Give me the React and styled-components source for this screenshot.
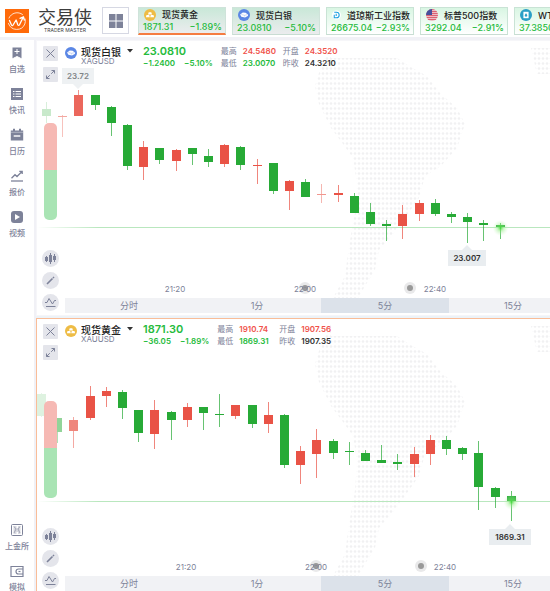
import React from "react";
import styled, { createGlobalStyle, css } from "styled-components";

const green = "#27aa36";
const red = "#e95346";
const up = "#f0524a";
const down = "#25bb3c";
const slate = "#7d8299";

const GlobalStyle = createGlobalStyle`
  * { box-sizing: border-box; }
  body {
    margin: 0;
    background: #fff;
    color: #333;
    font-family: Inter, "Noto Sans CJK SC", sans-serif;
    font-size: 8px;
  }
  button { font: inherit; color: inherit; padding: 0; border: 0; background: none; cursor: pointer; }
`;

const Page = styled.div`
  display: flex;
  flex-direction: column;
  height: 100vh;
  overflow: hidden;
`;

const TopBar = styled.header`
  display: flex;
  flex: none;
  align-items: flex-start;
  height: 40px;
  padding: 7px 0 0 5px;
  border-bottom: 3px solid #f1f1f6;
  overflow: hidden;
`;

const Brand = styled.a`
  display: flex;
  flex: none;
  gap: 9px;
  width: 97px;
  padding-top: 2px;
  color: #3c3c3c;
  text-decoration: none;
`;

const BrandText = styled.span`
  display: flex;
  flex-direction: column;
  align-items: center;
`;

const BrandName = styled.strong`
  font-size: 18px;
  line-height: 18px;
  font-weight: 400;
`;

const BrandSub = styled.small`
  font-size: 5px;
  line-height: 7px;
  letter-spacing: 0;
  white-space: nowrap;
`;

const GridButton = styled.button`
  display: grid;
  place-items: center;
  flex: none;
  width: 27px;
  height: 27px;
  margin-right: 9px;
  border: 1px solid #d6d8e3;
`;

const TickerList = styled.div`
  display: flex;
  gap: 6px;
`;

const Ticker = styled.button`
  flex: none;
  width: 88px;
  height: 28px;
  padding: 0 3px 0 4px;
  border: 1px solid ${(p) => (p.$shaded ? "#cfe3da" : "#c9e3d5")};
  border-bottom: ${(p) => (p.$active ? "2px solid #f57c42" : "1px solid #c9dcd3")};
  background: ${(p) =>
    p.$shaded ? "linear-gradient(#c9e8d8, #ebecee)" : "linear-gradient(#d9f6e3, #fff)"};
  text-align: left;
`;

const TickerHead = styled.span`
  display: flex;
  align-items: center;
  gap: 6px;
  height: 13px;
  padding-left: 1px;
  color: #222;
  font-size: 9px;
  font-weight: 500;
  white-space: nowrap;
`;

const TickerNumbers = styled.span`
  display: flex;
  justify-content: space-between;
  color: ${down};
  font-size: 9px;
  line-height: 12px;
  font-weight: 500;
`;

const Body = styled.div`
  display: flex;
  flex: 1;
  min-height: 0;
`;

const SideBar = styled.nav`
  display: flex;
  flex: none;
  flex-direction: column;
  justify-content: space-between;
  width: 36px;
  padding-top: 6px;
  border-right: 2px solid #f1f1f6;
`;

const SideGroup = styled.div`
  display: flex;
  flex-direction: column;
  gap: 14px;
`;

const SideItem = styled.button`
  display: flex;
  flex-direction: column;
  align-items: center;
  gap: 5px;
  color: ${slate};
  font-size: 8px;
  line-height: 8px;
  font-weight: 500;
  white-space: nowrap;
`;

const Panels = styled.main`
  display: flex;
  flex: 1;
  flex-direction: column;
  gap: 2px;
  min-width: 0;
  overflow: hidden;
  background: #edf3f8;
`;

const PanelBox = styled.section`
  position: relative;
  display: flex;
  flex: none;
  padding-bottom: 2px;
  border: 1px solid ${(p) => (p.$selected ? "#f9bd98" : "#f6f6f9")};
  border-right: 0;
  background: #fff;
  overflow: hidden;
`;

const Canvas = styled.svg`
  position: absolute;
  inset: 0;
  width: 100%;
  height: 100%;
`;

const AxisText = styled.text`
  fill: ${slate};
  font-size: 8px;
  text-anchor: middle;
`;

const TagText = styled.text`
  fill: ${(p) => (p.$faded ? "#808487" : "#333")};
  font-size: 8px;
  font-weight: 600;
  text-anchor: middle;
`;

const Rail = styled.div`
  position: relative;
  display: flex;
  flex: none;
  flex-direction: column;
  align-items: center;
  width: 28px;
  padding: 5px 1px 2px 0;
`;

const SquareButton = styled.button`
  display: grid;
  place-items: center;
  width: 15px;
  height: 15px;
  margin-bottom: 6px;
  border-radius: 1px;
  background: #e4e5eb;
  color: ${slate};
`;

const Gauge = styled.div`
  width: 13px;
  height: 97px;
  margin: 35px 0 30px;
  border-radius: 5px;
  background: linear-gradient(#f6b9b4 48%, #a9e4b4 48%);
`;

const Tools = styled.div`
  display: flex;
  flex-direction: column;
  gap: 5px;
`;

const RoundButton = styled.button`
  display: grid;
  place-items: center;
  width: 17px;
  height: 17px;
  border-radius: 50%;
  background: #e4e5eb;
  color: ${slate};
`;

const Content = styled.div`
  position: relative;
  display: flex;
  flex: 1;
  flex-direction: column;
  justify-content: space-between;
  min-width: 0;
  overflow: hidden;
`;

const PanelHead = styled.div`
  display: flex;
  padding-top: 4px;
`;

const CoinSlot = styled.span`
  flex: none;
  width: 16px;
  padding-top: 2px;
`;

const Symbol = styled.div`
  flex: none;
  width: 62px;
`;

const SymbolPicker = styled.button`
  display: flex;
  align-items: center;
  gap: 6px;
  height: 12px;
  color: #222;
  font-size: 10px;
  font-weight: 500;
  white-space: nowrap;
`;

const SymbolCode = styled.div`
  color: ${slate};
  font-size: 8px;
  line-height: 8px;
`;

const Quote = styled.div`
  flex: none;
  margin-right: 8px;
  color: ${down};
`;

const Price = styled.div`
  font-size: 11px;
  line-height: 12px;
  font-weight: 600;
`;

const Change = styled.div`
  display: flex;
  gap: 9px;
  font-size: 8px;
  line-height: 12px;
  font-weight: 600;
`;

const Stats = styled.dl`
  display: grid;
  grid-template-columns: 22px 40px 22px auto;
  grid-auto-rows: 12px;
  margin: 0;
  font-size: 8px;
  line-height: 12px;
  white-space: nowrap;
`;

const Pair = styled.div`
  display: contents;
`;

const StatLabel = styled.dt`
  color: ${slate};
`;

const StatValue = styled.dd`
  margin: 0;
  color: ${(p) => p.$color};
  font-weight: 600;
`;

const Tabs = styled.div`
  display: flex;
  height: 15px;
  overflow: hidden;
`;

const Tab = styled.button`
  flex: 0 0 128px;
  background: #f1f2f5;
  color: ${slate};
  font-size: 9px;
  line-height: 15px;
  ${(p) => p.$on && css`background: #dce2ea;`}
`;

function Coin({ kind, size = 12 }) {
  return (
    <svg width={size} height={size} viewBox="0 0 12 12" aria-hidden="true">
      {kind === "gold" && (
        <>
          <circle cx="6" cy="6" r="6" fill="#eebc45" />
          <path d="M4.7 3.2h2.6l.7 2.2H4zM2.5 6h2.7l.6 2.3H1.9zM6.8 6h2.7l.6 2.3H6.2z" fill="#fff" />
        </>
      )}
      {kind === "silver" && (
        <>
          <circle cx="6" cy="6" r="6" fill="#5b87e5" />
          <path d="M2.1 5.4 4.8 3.5l2.8.2 2.5 2-.3 1.4-2.8 1.4-3.6-.8z" fill="#fff" />
          <path d="m3.3 5.5 3.3.8 2.6-.6M6.6 6.3v1.2" stroke="#a9c0f3" strokeWidth=".6" fill="none" />
        </>
      )}
      {kind === "dow" && (
        <>
          <circle cx="6" cy="6" r="6" fill="#fff" />
          <path d="M3 2.200h2.800a3.800 3.800 0 0 1 0 7.600H3V5.500M5.600 4.300v3.200" stroke="#1a9fe0" strokeWidth="1.400" fill="none" />
        </>
      )}
      {kind === "usa" && (
        <>
          <clipPath id="flag"><circle cx="6" cy="6" r="6" /></clipPath>
          <g clipPath="url(#flag)">
            <path d="M0 0h12v12H0z" fill="#f4d9dd" />
            <path d="M0 .7h12M0 2.7h12M0 4.7h12M0 6.7h12M0 8.7h12M0 10.7h12" stroke="#d6455b" />
            <path d="M0 0h6v6H0z" fill="#46519c" />
          </g>
        </>
      )}
      {kind === "oil" && (
        <>
          <circle cx="6" cy="6" r="6" fill="#2b9fc6" />
          <path d="M3.4 2.8h5.2v6.4H3.4z" fill="#fff" />
          <path d="M6 4.3c2 2.2 1.3 3.4 0 3.4s-2-1.2 0-3.4z" fill="#2b9fc6" />
        </>
      )}
    </svg>
  );
}

const tickers = [
  { kind: "gold", name: "现货黄金", price: "1871.31", pct: "−1.89%", shaded: true, active: true },
  { kind: "silver", name: "现货白银", price: "23.0810", pct: "−5.10%", shaded: true },
  { kind: "dow", name: "道琼斯工业指数", price: "26675.04", pct: "−2.93%" },
  { kind: "usa", name: "标普500指数", price: "3292.04", pct: "−2.91%" },
  { kind: "oil", name: "WTI原油", price: "37.3850", pct: "−3.46%" },
];

const sideIcons = {
  bookmark: <path d="M2 1h10v12L7 10.5 2 13zM7 3v5M4.500 5.500h5" fill="#7d8299" stroke="#fff" strokeWidth="1" />,
  news: (
    <>
      <path d="M1 1h12v12H1z" fill="#7d8299" />
      <path d="M3 4.500h1.500M5.500 4.500H11M3 7h1.500M5.500 7H11M3 9.500h1.500M5.500 9.500H11" stroke="#fff" strokeWidth="1" />
    </>
  ),
  calendar: (
    <>
      <path d="M.8 2.500h12.400V12.500H.8zM3 .8h2v3H3zM9 .8h2v3H9z" fill="#7d8299" />
      <path d="M.8 4.300h12.400" stroke="#fff" strokeWidth=".4" />
      <path d="M3.700 8h6.600" stroke="#fff" strokeWidth="1.400" />
    </>
  ),
  quotes: (
    <>
      <path d="M1.500 9.200 5 5.700l2 1.800L12 2.500M9.300 2.300H12.200V5" fill="none" stroke="#7d8299" strokeWidth="1.300" />
      <path d="M1 12h12" stroke="#7d8299" strokeWidth="1.300" />
    </>
  ),
  video: (
    <>
      <rect x="1" y="1" width="12" height="12" rx="3" fill="#7d8299" />
      <path d="m5 4 5 3-5 3z" fill="#fff" />
    </>
  ),
  exchange: (
    <g fill="none" stroke="#7d8299">
      <rect x="1.500" y="1.500" width="11" height="11" rx="1" />
      <path d="M3.500 4h3M8 4h2.500M3.500 6h7M3.500 8h7M3.500 10h3M8 10h2.500M4 3.500l2 2.500-2 4M10 3.500 8 6l2 4" strokeWidth=".6" />
    </g>
  ),
  wallet: (
    <g fill="none" stroke="#7d8299">
      <path d="M13 4.500v-2H1v10h12v-2M13 5H8.500a2.500 2.500 0 0 0 0 5H13z" strokeWidth="1.200" />
      <path d="M8.500 7.500h2" strokeWidth="1.200" />
    </g>
  ),
};

const sideTop = [
  ["bookmark", "自选"],
  ["news", "快讯"],
  ["calendar", "日历"],
  ["quotes", "报价"],
  ["video", "视频"],
];
const sideBottom = [
  ["exchange", "上金所"],
  ["wallet", "模拟"],
];

// Each candle: colour, high, low, body top, body bottom, opacity.
const silverCandles = [
  ["g", 61, 82, 68, 75, 0.25],
  ["r", 74, 96, 75, 76, 0.5],
  ["r", 49, 75, 54, 75, 0.88],
  ["g", 54, 69, 54, 64],
  ["g", 65, 95, 66, 82],
  ["g", 83, 129, 84, 125],
  ["r", 100, 139, 106, 126],
  ["g", 107, 123, 107, 119],
  ["r", 108, 130, 109, 120],
  ["g", 107, 124, 107, 113],
  ["g", 108, 126, 115, 121],
  ["r", 103, 126, 104, 123],
  ["g", 105, 129, 106, 124],
  ["r", 118, 143, 124, 125],
  ["g", 122, 153, 122, 150],
  ["r", 139, 169, 140, 150],
  ["g", 138, 156, 141, 156],
  ["r", 143, 162, 153, 154, 0.6],
  ["r", 144, 161, 152, 154],
  ["g", 152, 172, 155, 172],
  ["g", 162, 185, 171, 183],
  ["g", 179, 200, 183, 185],
  ["r", 164, 198, 173, 185],
  ["r", 159, 180, 162, 173],
  ["g", 158, 175, 162, 173],
  ["g", 171, 182, 173, 176],
  ["g", 172, 202, 176, 181],
  ["g", 179, 200, 182, 184],
  ["g", 182, 198, 184, 186],
];

const goldCandles = [
  ["g", 74, 98, 75, 97, 0.15],
  ["g", 99, 124, 99, 113, 0.5],
  ["r", 98, 129, 101, 112, 0.7],
  ["r", 67, 101, 77, 99],
  ["r", 68, 88, 72, 77],
  ["g", 71, 100, 73, 89],
  ["g", 91, 123, 91, 114],
  ["r", 81, 130, 91, 115],
  ["g", 92, 121, 93, 101],
  ["r", 84, 108, 88, 101],
  ["g", 88, 111, 88, 94],
  ["g", 75, 108, 95, 96],
  ["r", 86, 100, 86, 97],
  ["g", 86, 109, 86, 105],
  ["r", 83, 114, 96, 105],
  ["g", 95, 149, 96, 146],
  ["r", 127, 165, 132, 146],
  ["r", 110, 159, 121, 135],
  ["g", 120, 140, 122, 134],
  ["g", 123, 146, 132, 133],
  ["g", 131, 142, 134, 142],
  ["g", 126, 144, 141, 144],
  ["g", 135, 151, 143, 145],
  ["r", 128, 158, 135, 145],
  ["r", 116, 146, 121, 135],
  ["g", 117, 136, 121, 130],
  ["g", 128, 141, 129, 135],
  ["g", 122, 191, 134, 168],
  ["g", 168, 189, 169, 178],
  ["g", 172, 202, 177, 182],
];

const panels = [
  {
    id: "silver", name: "现货白银", code: "XAGUSD", price: "23.0810", change: "−1.2400", pct: "−5.10%",
    high: "24.5480", open: "24.3520", low: "23.0070", prev: "24.3210",
    candles: silverCandles, start: 9, line: 187,
    times: [[138, "21:20"], [268, "22:00"], [398, "22:40"]], events: [268, 373],
    topTag: { x: 41, y: 27, w: 32, text: "23.72" }, lowTag: { x: 430, y: 209, w: 38, text: "23.007" },
  },
  {
    id: "gold", name: "现货黄金", code: "XAUUSD", price: "1871.30", change: "−36.05", pct: "−1.89%",
    high: "1910.74", open: "1907.56", low: "1869.31", prev: "1907.35",
    candles: goldCandles, start: 4, line: 183, selected: true,
    times: [[149, "21:20"], [279, "22:00"], [408, "22:40"]], events: [279, 384],
    lowTag: { x: 473, y: 210, w: 42, text: "1869.31" },
  },
];

const continents =
  "M294 17h66l12 8 18 10 14 18 16 14 8 16-8 24-16 18-16 10-6 22-14 20-12 16-14 16-4 20-10 16-8 14-4 12h-24l4-14 12-22 4-30 6-34 2-28-4-26-10-14-12-16-12-24-4-18 6-20 10-20zM494 7h40v26h-34z";

function Chart({ panel }) {
  const { id, candles, start, line, topTag, lowTag } = panel;
  const xs = candles.map((_, i) => Math.round(start + i * 16.2));
  const last = xs[xs.length - 1];
  return (
    <Canvas aria-hidden="true">
      <defs>
        <pattern id={`dots-${id}`} width="4" height="5" patternUnits="userSpaceOnUse">
          <circle cx="2" cy="2.500" r="1.300" fill="#f1f1f2" />
        </pattern>
        <linearGradient id={`fade-${id}`}>
          <stop offset="0" stopColor="#b9e7be" stopOpacity="0" />
          <stop offset=".12" stopColor="#b9e7be" />
        </linearGradient>
        <radialGradient id={`glow-${id}`}>
          <stop offset="0" stopColor="#3ddc34" stopOpacity=".9" />
          <stop offset=".4" stopColor="#8cec7c" stopOpacity=".45" />
          <stop offset="1" stopColor="#c9f7c0" stopOpacity="0" />
        </radialGradient>
      </defs>
      <path d={continents} fill={`url(#dots-${id})`} />
      <rect x="0" y={line - 1} width="100%" height="1" fill={`url(#fade-${id})`} />
      {candles.map(([tone, high, low, top, bottom, alpha = 1], i) => (
        <g key={i} fill={tone === "g" ? green : red} opacity={alpha}>
          <rect x={xs[i]} y={high} width="1" height={low - high} opacity=".7" />
          <rect x={xs[i] - 4} y={top} width="9" height={Math.max(1, bottom - top)} />
        </g>
      ))}
      <circle cx={last + 0.5} cy={line} r="8" fill={`url(#glow-${id})`} />
      {topTag && (
        <g>
          <path
            d={`M${topTag.x - topTag.w / 2} ${topTag.y}h${topTag.w}v16h-${topTag.w / 2 - 5}l-5 5-5-5h-${topTag.w / 2 - 5}z`}
            fill="#eef1f3"
          />
          <TagText x={topTag.x} y={topTag.y + 11} $faded>{topTag.text}</TagText>
        </g>
      )}
      <path
        d={`M${lowTag.x - lowTag.w / 2} ${lowTag.y}h${lowTag.w / 2 - 5}l5-5 5 5h${lowTag.w / 2 - 5}v16h-${lowTag.w}z`}
        fill="#e9edf0"
      />
      <TagText x={lowTag.x} y={lowTag.y + 11}>{lowTag.text}</TagText>
      {panel.events.map((x) => (
        <g key={x}>
          <circle cx={x} cy="247" r="6" fill="#e9e9ea" />
          <circle cx={x} cy="247" r="3" fill="#999" />
        </g>
      ))}
      {panel.times.map(([x, label]) => (
        <AxisText key={label} x={x} y="251">{label}</AxisText>
      ))}
    </Canvas>
  );
}

function Stat({ label, value, color }) {
  return (
    <Pair>
      <StatLabel>{label}</StatLabel>
      <StatValue $color={color}>{value}</StatValue>
    </Pair>
  );
}

function Panel({ panel }) {
  return (
    <PanelBox $selected={panel.selected}>
      <Chart panel={panel} />
      <Rail>
        <SquareButton aria-label="关闭">
          <svg width="11" height="11" fill="none" stroke="currentColor"><path d="m1.500 1.500 8 8m0-8-8 8" /></svg>
        </SquareButton>
        <SquareButton aria-label="放大">
          <svg width="11" height="11" fill="none" stroke="currentColor">
            <path d="M6.200 4.800 9.500 1.500M6.500 1.500h3v3M4.800 6.200 1.500 9.500M1.500 6.500v3h3" />
          </svg>
        </SquareButton>
        <Gauge />
        <Tools>
          <RoundButton aria-label="图表类型">
            <svg width="13" height="13" fill="currentColor">
              <path d="M1 5h3v4H1zM5 3h3v7H5zM9 4h3v4H9zM2 4h1v6H2zM6 1h1v11H6zM10 2h1v8h-1z" />
            </svg>
          </RoundButton>
          <RoundButton aria-label="画线">
            <svg width="11" height="11" stroke="currentColor" strokeWidth="1.600">
              <path d="m2 9 5.500-5.500M8 3l1-1" />
            </svg>
          </RoundButton>
          <RoundButton aria-label="指标">
            <svg width="13" height="13" fill="none" stroke="currentColor">
              <path d="M1 6.500h2L5 2.500l3.500 5.500 2-3.500H12M2 10.500h9.500" />
            </svg>
          </RoundButton>
        </Tools>
      </Rail>
      <Content>
        <PanelHead>
          <CoinSlot><Coin kind={panel.id} /></CoinSlot>
          <Symbol>
            <SymbolPicker>
              {panel.name}
              <svg width="6" height="4" fill="#333"><path d="M0 0h6L3 3.500z" /></svg>
            </SymbolPicker>
            <SymbolCode>{panel.code}</SymbolCode>
          </Symbol>
          <Quote>
            <Price>{panel.price}</Price>
            <Change><span>{panel.change}</span><span>{panel.pct}</span></Change>
          </Quote>
          <Stats>
            <Stat label="最高" value={panel.high} color={up} />
            <Stat label="开盘" value={panel.open} color={up} />
            <Stat label="最低" value={panel.low} color={down} />
            <Stat label="昨收" value={panel.prev} color="#333" />
          </Stats>
        </PanelHead>
        <Tabs>
          {["分时", "1分", "5分", "15分"].map((label) => (
            <Tab key={label} $on={label === "5分"}>{label}</Tab>
          ))}
        </Tabs>
      </Content>
    </PanelBox>
  );
}

function SideLinks({ items }) {
  return (
    <SideGroup>
      {items.map(([icon, label]) => (
        <SideItem key={icon}>
          <svg width="14" height="14" aria-hidden="true">{sideIcons[icon]}</svg>
          {label}
        </SideItem>
      ))}
    </SideGroup>
  );
}

export default function App() {
  return (
    <Page>
      <GlobalStyle />
      <TopBar>
        <Brand href="#">
          <svg width="24" height="24" aria-hidden="true">
            <path d="M0 0h24v24H0z" fill="#ff6a0a" />
            <g fill="none" stroke="#fff" strokeLinecap="round" strokeLinejoin="round">
              <path d="M17.500 5.500A8.700 8.700 0 0 0 4 9M3.500 14.500a8.700 8.700 0 0 0 16.300.5c.6-1.500.7-3.500.4-5" strokeWidth=".8" />
              <path d="m4.500 11.500 2 4.500c.5.800 1.200.7 1.600 0l3-5 1.700 4.700c.4.900 1.200.9 1.700 0L18.300 8M15 9.300l3.500-1.500.8 3.200" strokeWidth="1.300" />
            </g>
          </svg>
          <BrandText>
            <BrandName>交易侠</BrandName>
            <BrandSub>TRADER MASTER</BrandSub>
          </BrandText>
        </Brand>
        <GridButton aria-label="布局">
          <svg width="14" height="14" fill={slate}>
            <path d="M0 0h6.500v6.500H0zM7.500 0H14v6.500H7.500zM0 7.500h6.500V14H0zM7.500 7.500H14V14H7.500z" />
          </svg>
        </GridButton>
        <TickerList>
          {tickers.map((t) => (
            <Ticker key={t.name} $shaded={t.shaded} $active={t.active}>
              <TickerHead><Coin kind={t.kind} />{t.name}</TickerHead>
              <TickerNumbers><span>{t.price}</span><span>{t.pct}</span></TickerNumbers>
            </Ticker>
          ))}
        </TickerList>
      </TopBar>
      <Body>
        <SideBar>
          <SideLinks items={sideTop} />
          <SideLinks items={sideBottom} />
        </SideBar>
        <Panels>
          {panels.map((p) => <Panel key={p.id} panel={p} />)}
        </Panels>
      </Body>
    </Page>
  );
}
